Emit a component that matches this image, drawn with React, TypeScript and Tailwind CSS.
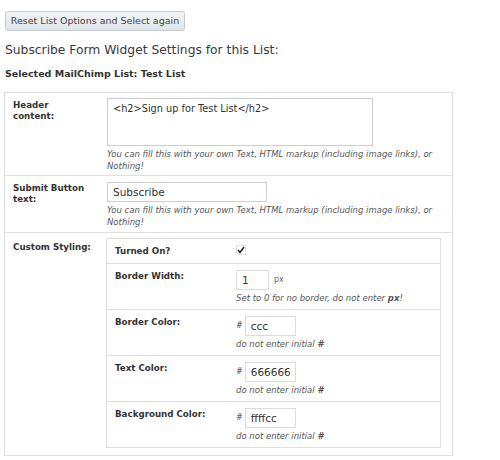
import React from "react";

const font = { fontFamily: '"DejaVu Sans", Verdana, sans-serif' };

function Help({ children }: { children: React.ReactNode }) {
  return <div className="italic text-[8.5px] leading-[12px] text-[#555] mt-[2px]">{children}</div>;
}

function Hash({ value }: { value: string }) {
  return (
    <div className="flex items-center">
      <span className="text-[8px] text-[#444] mr-[2px]">#</span>
      <div className="w-[51px] h-[20px] border border-[#dcdcdc] bg-white text-[10.5px] text-[#333] pl-[5px] leading-[18px]">{value}</div>
    </div>
  );
}

const lbl = "pl-[8px] pt-[7px] text-[8.7px] font-bold leading-[11px] text-[#333]";

export default function App() {
  return (
    <div className="w-[500px] h-[460px] bg-white text-[#333] overflow-hidden" style={font}>
      <div className="pl-[5px] pt-[7px]">
        <div className="inline-block h-[20px] w-[180px] rounded-[3px] border border-[#c3cbd0] bg-gradient-to-b from-[#f2f5f7] to-[#dfe5e9] text-[9.5px] leading-[18px] text-[#444] text-center">
          Reset List Options and Select again
        </div>
      </div>
      <div className="pl-[5px] mt-[12px] text-[12.3px] text-[#3a3a3a] leading-[14px]">Subscribe Form Widget Settings for this List:</div>
      <div className="pl-[5px] mt-[11px] text-[9.5px] font-bold text-[#333] leading-[12px]">Selected MailChimp List: Test List</div>

      <div className="ml-[4px] mt-[12px] w-[449px] border border-[#dfdfdf]">
        {/* row 1 */}
        <div className="flex h-[83px] border-b border-[#dfdfdf]">
          <div className={"w-[102px] " + lbl}>Header<br />content:</div>
          <div className="pt-[5px]">
            <div className="w-[266px] h-[48px] border border-[#cfcfcf] bg-white text-[9.75px] pl-[5px] pt-[4px] leading-[12px] text-[#333]">
              &lt;h2&gt;Sign up for Test List&lt;/h2&gt;
            </div>
            <Help>
              You can fill this with your own Text, HTML markup (including image links), or
              <br />
              Nothing!
            </Help>
          </div>
        </div>
        {/* row 2 */}
        <div className="flex h-[57px] border-b border-[#dfdfdf]">
          <div className={"w-[102px] " + lbl}>Submit Button<br />text:</div>
          <div className="pt-[6px]">
            <div className="w-[160px] h-[20px] border border-[#cfcfcf] bg-white text-[10.5px] pl-[5px] leading-[18px] text-[#333]">Subscribe</div>
            <Help>
              You can fill this with your own Text, HTML markup (including image links), or
              <br />
              Nothing!
            </Help>
          </div>
        </div>
        {/* row 3 */}
        <div className="flex pt-[5px] pb-[7px]">
          <div className="w-[101px] pl-[8px] pt-[4px] text-[8.7px] font-bold leading-[11px] text-[#333]">Custom Styling:</div>
          <div className="w-[335px] border border-[#dfdfdf]">
            <div className="flex h-[25px] border-b border-[#dfdfdf]">
              <div className={"w-[129px] " + lbl}>Turned On?</div>
              <div className="pt-[6px]">
                <svg width="10" height="10" viewBox="0 0 10 10">
                  <rect x="0.5" y="0.5" width="9" height="9" fill="#fff" stroke="#e2e2e2" />
                  <path d="M2 5 L4 7.5 L8 2" fill="none" stroke="#222" strokeWidth="1.5" />
                </svg>
              </div>
            </div>
            <div className="flex h-[46px] border-b border-[#dfdfdf]">
              <div className={"w-[129px] " + lbl}>Border Width:</div>
              <div className="pt-[6px]">
                <div className="flex items-center">
                  <div className="w-[33px] h-[20px] border border-[#dcdcdc] bg-white text-[10.5px] pl-[5px] leading-[18px]">1</div>
                  <span className="ml-[5px] text-[8px] text-[#666]">px</span>
                </div>
                <Help>
                  Set to 0 for no border, do not enter <b>px</b>!
                </Help>
              </div>
            </div>
            <div className="flex h-[46px] border-b border-[#dfdfdf]">
              <div className={"w-[129px] " + lbl}>Border Color:</div>
              <div className="pt-[6px]">
                <Hash value="ccc" />
                <Help>do not enter initial <b>#</b></Help>
              </div>
            </div>
            <div className="flex h-[46px] border-b border-[#dfdfdf]">
              <div className={"w-[129px] " + lbl}>Text Color:</div>
              <div className="pt-[6px]">
                <Hash value="666666" />
                <Help>do not enter initial <b>#</b></Help>
              </div>
            </div>
            <div className="flex h-[45px]">
              <div className={"w-[129px] " + lbl}>Background Color:</div>
              <div className="pt-[6px]">
                <Hash value="ffffcc" />
                <Help>do not enter initial <b>#</b></Help>
              </div>
            </div>
          </div>
        </div>
      </div>
    </div>
  );
}
